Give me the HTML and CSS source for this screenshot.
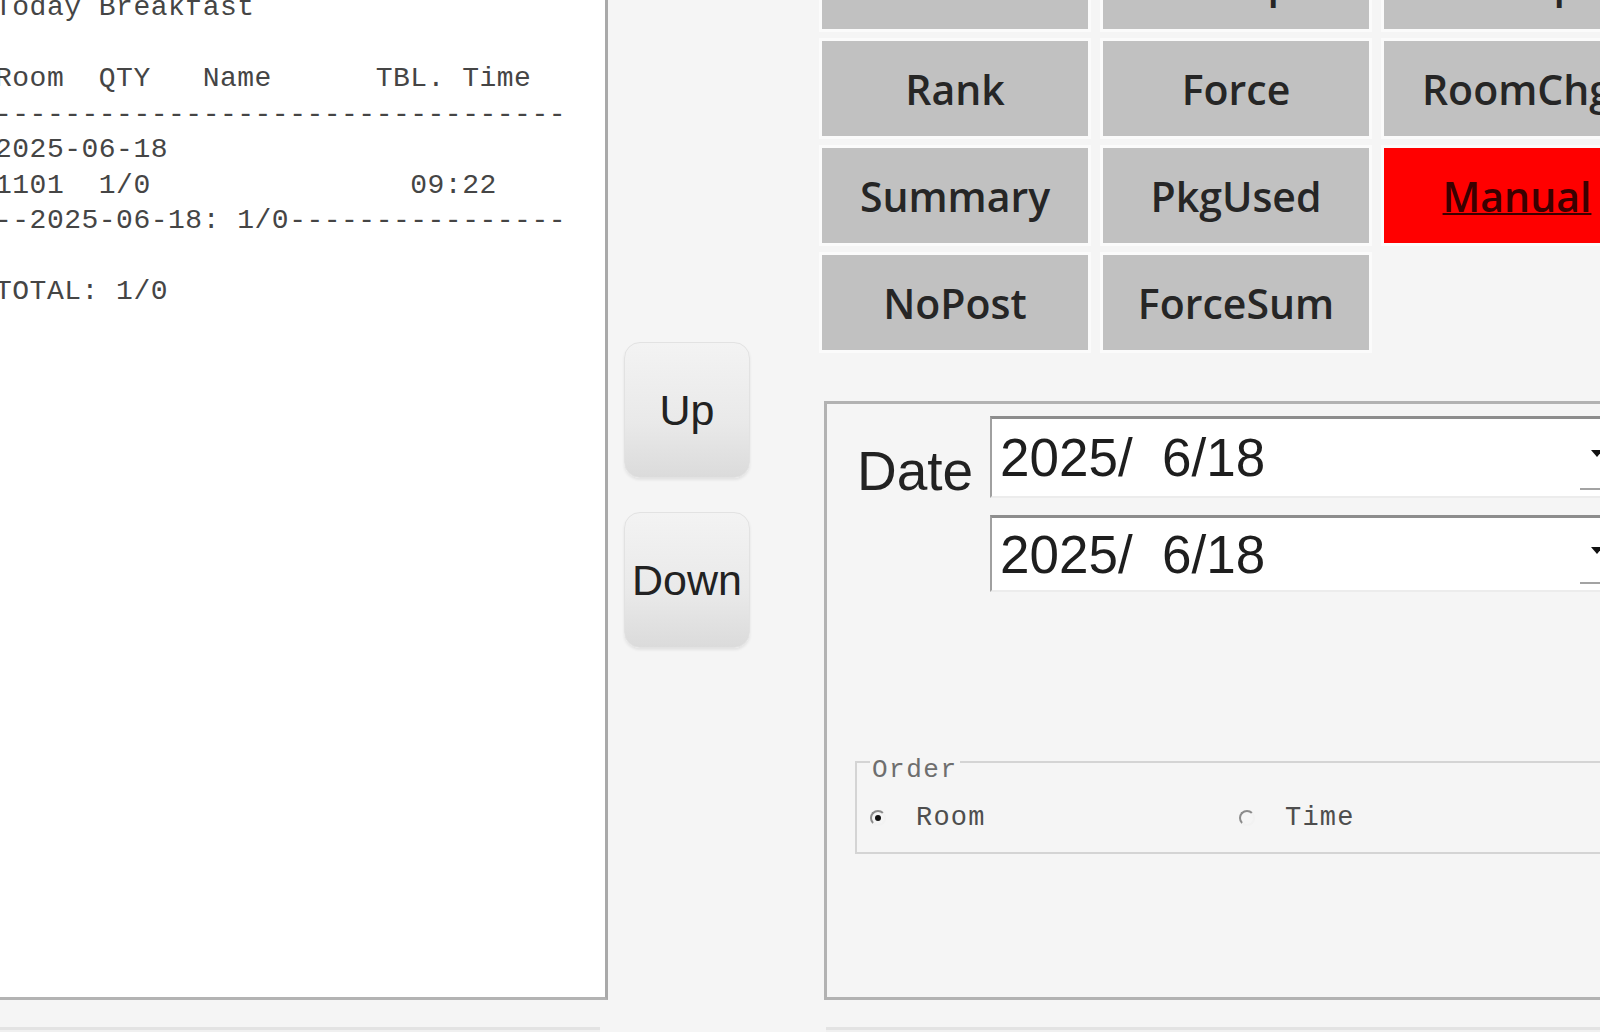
FILE: index.html
```html
<!DOCTYPE html>
<html lang="en">
<head>
<meta charset="utf-8">
<title>Breakfast Report</title>
<link rel="stylesheet" href="styles.css">
</head>
<body>
<div class="window">
  <section class="report">
<pre class="report-text">Today Breakfast

Room  QTY   Name      TBL. Time
---------------------------------
2025-06-18
1101  1/0               09:22
--2025-06-18: 1/0----------------

TOTAL: 1/0</pre>
  </section>

  <div class="nav">
    <button class="nav-btn" type="button">Up</button>
    <button class="nav-btn" type="button">Down</button>
  </div>

  <div class="side">
    <div class="grid">
      <div class="cell">Detail</div>
      <div class="cell">Setup</div>
      <div class="cell">Group</div>
      <div class="cell">Rank</div>
      <div class="cell">Force</div>
      <div class="cell">RoomChg</div>
      <div class="cell">Summary</div>
      <div class="cell">PkgUsed</div>
      <div class="cell cell-alert">Manual</div>
      <div class="cell">NoPost</div>
      <div class="cell">ForceSum</div>
    </div>

    <div class="filter">
      <div class="date-row">
        <span class="date-label">Date</span>
        <div class="date-fields">
          <div class="date-input date-input-first">
            <span class="date-value">2025/  6/18</span>
            <span class="drop-btn"><span class="drop-arrow"></span></span>
          </div>
          <div class="date-input">
            <span class="date-value">2025/  6/18</span>
            <span class="drop-btn"><span class="drop-arrow"></span></span>
          </div>
        </div>
      </div>

      <fieldset class="order">
        <legend class="order-title">Order</legend>
        <div class="order-options">
          <label class="option option-room"><span class="radio radio-on"></span><span class="option-text">Room</span></label>
          <label class="option"><span class="radio"></span><span class="option-text">Time</span></label>
        </div>
      </fieldset>
    </div>
  </div>
</div>

<div class="footer">
  <div class="footer-box footer-left"></div>
  <div class="footer-box footer-right"></div>
</div>
</body>
</html>
```

FILE: styles.css
```css
* {
  box-sizing: border-box;
}

html,
body {
  margin: 0;
  padding: 0;
}

body {
  width: 1600px;
  height: 1032px;
  overflow: hidden;
  background: #f5f5f5;
  font-family: "Liberation Sans", Arial, sans-serif;
  color: #222;
}

.window {
  display: flex;
  height: 1000px;
}

/* printed report preview */
.report {
  flex: none;
  width: 608px;
  background: #fff;
  border-right: 3px solid #a9a9a9;
  border-bottom: 3px solid #b3b3b3;
  overflow: hidden;
}

.report-text {
  margin: -10px 0 0 -5px;
  font-family: "Liberation Mono", "DejaVu Sans Mono", monospace;
  font-size: 28px;
  line-height: 35.5px;
  letter-spacing: 0.5px;
  color: #454545;
  white-space: pre;
}

/* page navigation */
.nav {
  flex: none;
  width: 214px;
  display: flex;
  flex-direction: column;
  align-items: flex-start;
  gap: 34px;
  padding: 342px 0 0 16px;
}

.nav-btn {
  width: 126px;
  height: 136px;
  border: 1px solid #e2e2e2;
  border-radius: 16px;
  background: linear-gradient(#f3f3f3, #e9e9e9 60%, #dbdbdb);
  box-shadow: 0 2px 3px rgba(0, 0, 0, 0.08);
  font-family: "Liberation Sans", Arial, sans-serif;
  font-size: 43px;
  color: #222;
  padding: 0;
}

/* report selector */
.side {
  flex: none;
  width: 830px;
  display: flex;
  flex-direction: column;
}

.grid {
  display: grid;
  grid-template-columns: repeat(3, 266px);
  grid-auto-rows: 95px;
  column-gap: 15px;
  row-gap: 12px;
  margin-top: -66px;
}

.cell {
  display: flex;
  align-items: center;
  justify-content: center;
  background: #c1c1c1;
  box-shadow: 0 0 0 3px #fbfbfb;
  font-family: "Open Sans", "Noto Sans", sans-serif;
  font-weight: 600;
  font-size: 41px;
  color: #262626;
}

.cell-alert {
  background: #ff0000;
  color: #3a0000;
  text-decoration: underline;
  text-decoration-thickness: 2px;
}

/* filter panel */
.filter {
  flex: 1;
  margin: 51px 0 0 2px;
  border: 3px solid #b2b2b2;
  border-right: none;
  padding: 12px 0 0 28px;
}

.date-row {
  display: flex;
  align-items: flex-start;
}

.date-label {
  flex: none;
  width: 135px;
  padding: 24px 0 0 2px;
  font-size: 55px;
  line-height: 62px;
  color: #222;
}

.date-fields {
  display: flex;
  flex-direction: column;
  gap: 17px;
}

.date-input {
  display: flex;
  align-items: center;
  width: 700px;
  height: 77px;
  background: #fff;
  border-top: 3px solid #8d8d8d;
  border-left: 2px solid #a0a0a0;
  border-bottom: 2px solid #ececec;
}

.date-input-first {
  height: 82px;
}

.date-value {
  flex: none;
  width: 588px;
  padding-left: 8px;
  font-size: 53px;
  white-space: pre;
  color: #1e1e1e;
}

.drop-btn {
  flex: none;
  width: 34px;
  align-self: stretch;
  margin-bottom: 6px;
  border-bottom: 2px solid #a3a3a3;
  display: flex;
  align-items: center;
  justify-content: center;
}

.drop-arrow {
  width: 0;
  height: 0;
  border-left: 6px solid transparent;
  border-right: 6px solid transparent;
  border-top: 7px solid #111;
}

/* sort order group */
.order {
  width: 800px;
  height: 113px;
  margin: 149px 0 0 0;
  padding: 0 0 0 13px;
  border: 2px solid #d4d4d4;
  border-right: none;
}

.order-title {
  padding: 16px 2px 0;
  font-family: "Liberation Mono", "DejaVu Sans Mono", monospace;
  font-size: 26px;
  line-height: 26px;
  letter-spacing: 1.5px;
  color: #6e6e6e;
}

.order-options {
  display: flex;
  align-items: center;
  height: 30px;
  margin-top: 20px;
}

.option {
  display: flex;
  align-items: center;
  gap: 30px;
}

.option-room {
  width: 369px;
}

.option-text {
  font-family: "Liberation Mono", "DejaVu Sans Mono", monospace;
  font-size: 27px;
  letter-spacing: 1.2px;
  color: #4e4e4e;
}

.radio {
  flex: none;
  width: 16px;
  height: 16px;
  border-radius: 50%;
  border: 2px solid;
  border-color: #8c8c8c #f2f2f2 #f2f2f2 #8c8c8c;
  display: flex;
  align-items: center;
  justify-content: center;
}

.radio-on::after {
  content: "";
  width: 6px;
  height: 6px;
  border-radius: 50%;
  background: #111;
}

/* tops of the controls below */
.footer {
  display: flex;
  height: 32px;
  padding-top: 27px;
}

.footer-box {
  height: 5px;
  background: #f0f0f0;
  border-top: 3px solid #e3e3e3;
}

.footer-left {
  width: 600px;
}

.footer-right {
  flex: 1;
  margin-left: 226px;
}
```
